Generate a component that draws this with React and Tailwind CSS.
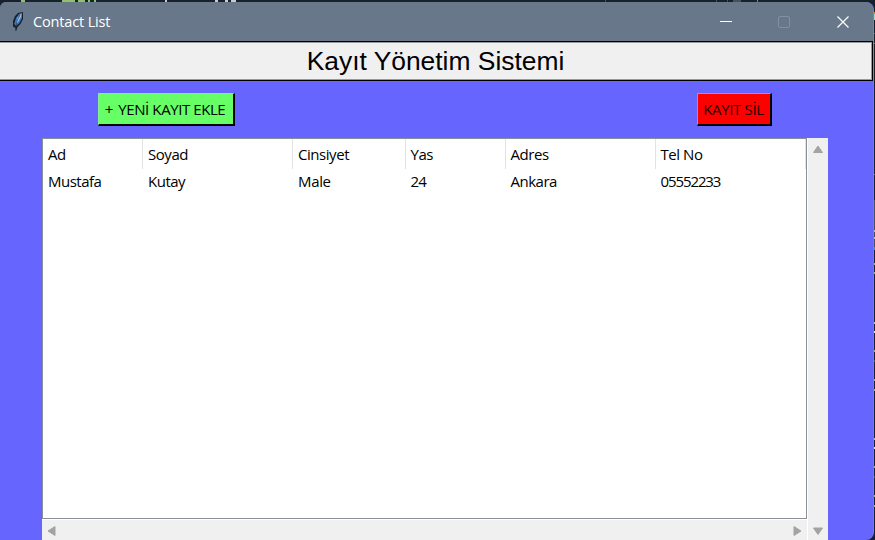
import React from 'react';

const columns = [
  { label: 'Ad', value: 'Mustafa', box: 'w-[99.5px] pl-[5px]', tracking: 'tracking-[-0.5px]' },
  { label: 'Soyad', value: 'Kutay', box: 'w-[150px] pl-[5.5px]', tracking: 'tracking-[-0.5px]' },
  { label: 'Cinsiyet', value: 'Male', box: 'w-[113px] pl-[5.5px]', tracking: 'tracking-[-0.35px]' },
  { label: 'Yas', value: '24', box: 'w-[100px] pl-[5px]', tracking: 'tracking-[-0.8px]' },
  { label: 'Adres', value: 'Ankara', box: 'w-[150px] pl-[5px]', tracking: 'tracking-[-0.5px]' },
  { label: 'Tel No', value: '05552233', box: 'w-[150px] pl-[5px]', tracking: 'tracking-[-1.1px]' },
];

// Fragments of the editor visible beyond the window's right edge.
const edgeMarks = [
  'top-[12px] h-[2px] bg-[#c98542]',
  'top-[14px] h-[6px] bg-[#9fd8c8]',
  'top-[33px] h-px bg-[#884e43]',
  'top-[43px] h-px bg-[#66727c]',
  'top-[174px] h-px bg-[#66727c]',
  'top-[200px] h-[50px] bg-[#46515c]',
  'top-[230px] h-[2px] bg-[#b4bcc0]',
  'top-[237px] h-[2px] bg-[#b4bcc0]',
  'top-[247px] h-[3px] bg-[#3f83c4]',
  'top-[263px] h-[2px] bg-[#90b37a]',
  'top-[272px] h-[2px] bg-[#90b37a]',
  'top-[322px] h-[2px] bg-[#b4bcc0]',
  'top-[331px] h-[2px] bg-[#dce0e2]',
  'top-[350px] h-[2px] bg-[#90b37a]',
  'top-[360px] h-[2px] bg-[#36575c]',
  'top-[379px] h-[2px] bg-[#90b37a]',
  'top-[389px] h-[2px] bg-[#90b37a]',
  'top-[438px] h-[2px] bg-[#b4bcc0]',
  'top-[447px] h-[2px] bg-[#dce0e2]',
  'top-[466px] h-[2px] bg-[#90b37a]',
  'top-[476px] h-[2px] bg-[#36575c]',
  'top-[495px] h-[2px] bg-[#90b37a]',
  'top-[505px] h-[2px] bg-[#90b37a]',
];

const topMarks = [
  'left-[21px] w-[4px] bg-[#90c067]',
  'left-[62px] w-[13px] bg-[#90c067]',
  'left-[78px] w-[7px] bg-[#90c067]',
  'left-[88px] w-[2px] bg-[#90c067]',
  'left-[94px] w-[2px] bg-[#90c067]',
  'left-[165px] w-[2px] bg-[#c5cbd0]',
  'left-[215px] w-[3px] bg-[#c5cbd0]',
  'left-[225px] w-[3px] bg-[#c5cbd0]',
  'left-[231px] w-[5px] bg-[#c5cbd0]',
  'left-[605px] w-px bg-[#46515c]',
  'left-[716px] w-px bg-[#46515c]',
  'left-[727px] w-px bg-[#46515c]',
  'left-[733px] w-[8px] bg-[#46515c]',
  'left-[757px] w-px bg-[#7b868f]',
];

function Feather() {
  return (
    <svg className="h-[21px] w-[14px]" viewBox="0 0 14 21">
      <path d="M4.5 20V17L2 15.5V10L4 5L7 2L12 1V8L9.5 13L6.5 16L5.2 20Z" fill="#17202b" />
      <path d="M3.2 13L5 7L8 3L11 2V7L8.5 12L5 15Z" fill="#3b79bd" />
      <path d="M5 13L6.5 7L10.5 2.2L9.8 6L7 11Z" fill="#a9cae9" />
      <path d="M4.5 18L6 10L9 4" fill="none" stroke="#1d3551" strokeWidth=".7" />
    </svg>
  );
}

function TitleBar() {
  return (
    <div className="flex h-[39px] items-center bg-[#68778a] pl-[11px] text-white">
      <Feather />
      <span className="ml-2 text-[14.5px] leading-[20px] tracking-[-0.15px]">Contact List</span>
      <div className="ml-auto flex items-center pr-6">
        <span className="mr-[46px] h-px w-3 bg-white" />
        <span className="mr-[47px] h-3 w-3 rounded-[2px] border border-[#8490a0]" />
        <svg className="h-3 w-3" viewBox="0 0 12 12">
          <path d="M.5 .5L11.5 11.5M11.5 .5L.5 11.5" stroke="white" strokeWidth="1.2" />
        </svg>
      </div>
    </div>
  );
}

function Arrow({ path }) {
  return (
    <svg className="h-3 w-3" viewBox="0 0 12 12">
      <path d={path} fill="#a3a3a3" stroke="#a3a3a3" strokeWidth="1" strokeLinejoin="round" />
    </svg>
  );
}

export default function App() {
  return (
    <div className="relative h-[540px] w-[875px] overflow-hidden bg-[#17212a] pt-[2px] font-['Open_Sans','Noto_Sans',sans-serif] text-black">
      {topMarks.map((c) => <i key={c} className={`absolute top-0 h-[2px] ${c}`} />)}
      {edgeMarks.map((c) => <i key={c} className={`absolute right-0 w-px ${c}`} />)}
      <div className="relative flex h-[538px] w-[874px] flex-col overflow-hidden rounded-tl-[6px] rounded-r-[8px] border-r border-[#7777ed] bg-[#6666ff]">
        <TitleBar />
        <div className="h-10 border-y border-r border-black">
          <h1 className="flex h-full items-center justify-center border-y border-r border-[#999] bg-[#f0f0f0] font-['Liberation_Sans',Arial,sans-serif] text-[26.4px] leading-none">
            Kayıt Yönetim Sistemi
          </h1>
        </div>
        <div className="flex h-[57px] items-start justify-between pr-[101px] pl-[98px] pt-3">
          <button className="h-[33px] w-[137px] border-t border-l border-r-2 border-b-2 border-t-[#84ee94] border-r-black border-b-black border-l-[#84ee94] bg-[#66ff66] pr-[2px] text-[15px] leading-[29px] tracking-[-0.42px] whitespace-nowrap">
            <span className="mr-[2px]">+</span> YENİ KAYIT EKLE
          </button>
          <button className="h-[33px] w-[75px] border-t border-l border-r-2 border-b-2 border-t-[#ff7070] border-r-black border-b-black border-l-[#ff7070] bg-[#ff0000] pr-px text-[15px] leading-[29px] tracking-[-0.35px] whitespace-nowrap text-[#220000]">KAYIT SİL</button>
        </div>
        <div className="ml-[42px] flex h-[402px] w-[786px]">
          <div className="flex w-[765px] flex-col">
            <div className="h-[381px] border border-[#8b8f98] bg-white text-[15px]">
              <div className="flex h-[30px]">
                {columns.map(({ label, box }) => (
                  <div key={label} className={`shrink-0 border-r border-[#e3e3e3] leading-[30px] tracking-[-0.45px] ${box}`}>{label}</div>
                ))}
              </div>
              <div className="flex h-[26px]">
                {columns.map(({ label, value, box, tracking }) => (
                  <div key={label} className={`shrink-0 leading-[24px] ${tracking} ${box}`}>{value}</div>
                ))}
              </div>
            </div>
            <div className="flex flex-1 items-center justify-between border-t border-white bg-[#f0f0f0] pt-px pr-1 pl-1">
              <Arrow path="M2 6L9 1.5V10.5Z" />
              <Arrow path="M10 6L3 1.5V10.5Z" />
            </div>
          </div>
          <div className="flex w-[21px] flex-col items-center justify-between border-l border-white bg-[#f0f0f0] pt-[5px] pb-[3px]">
            <Arrow path="M6 3L10.5 9.5H1.5Z" />
            <Arrow path="M6 9.5L10.5 3H1.5Z" />
          </div>
        </div>
      </div>
    </div>
  );
}
